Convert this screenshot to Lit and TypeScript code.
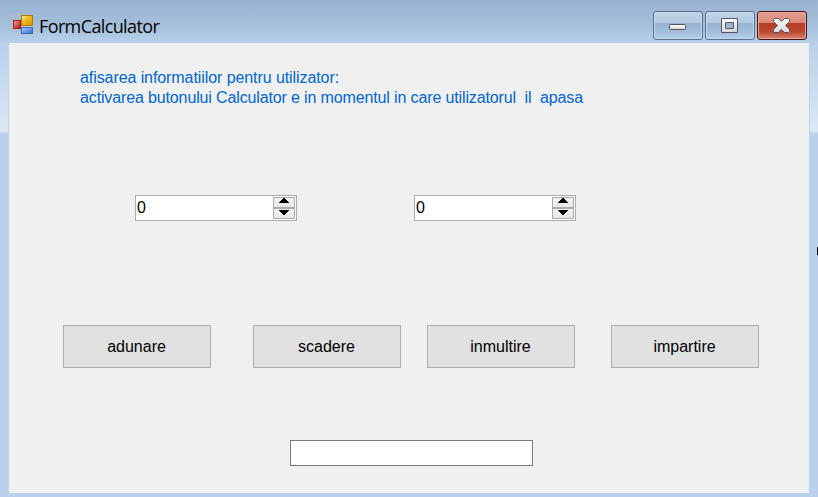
import { LitElement, html, css, svg } from "lit";
import { customElement, property } from "lit/decorators.js";

@customElement("num-box")
class NumBox extends LitElement {
  @property({ type: Number }) value = 0;
  static styles = css`
    :host { display: flex; box-sizing: border-box; width: 162px; height: 26px; border: 1px solid #ababab; background: #fff; padding: 1px; }
    .value { flex: 1; font: 16px/22px "Liberation Sans", Arial, sans-serif; color: #000; }
    .spin { display: flex; flex-direction: column; width: 22px; }
    .step { flex: 1; box-sizing: border-box; border: 1px solid #ababab; background: linear-gradient(#f2f2f2, #e8e8e8); display: flex; justify-content: center; }
    .step svg { display: block; width: 10px; height: 5px; margin-right: 1px; }
    .up svg { margin-top: 0; }
    .down svg { margin-top: 1px; }
  `;
  render() {
    return html`<div class="value">${this.value}</div>
      <div class="spin">
        <div class="step up"><svg viewBox="0 0 10 5" shape-rendering="crispEdges"><path d="M4 0h2v1h1v1h1v1h1v1h1v1H0V4h1V3h1V2h1V1h1z" /></svg></div>
        <div class="step down"><svg viewBox="0 0 10 5" shape-rendering="crispEdges"><path d="M0 0h10v1H9v1H8v1H7v1H6v1H4V4H3V3H2V2H1V1H0z" /></svg></div>
      </div>`;
  }
}

const glyphFill = svg`<defs><linearGradient id="g" x1="0" y1="0" x2="0" y2="1"><stop offset="0" stop-color="#fff" /><stop offset="1" stop-color="#d6d6d6" /></linearGradient></defs>`;

const glyphs = {
  min: svg`${glyphFill}<rect x="15.5" y="12.5" width="16" height="5" rx=".8" fill="url(#g)" stroke="#535666"/>`,
  max: svg`${glyphFill}<path d="M15.5 6.500h16v14h-16zM19.500 10.500v6h8v-6z" fill="url(#g)" stroke="#535666" fill-rule="evenodd"/>`,
  close: svg`${glyphFill}<path d="M16.500 6.500h4l3 3 3-3h4l1 1v2l-4 4 4 4v2l-1 1h-4l-3-3-3 3h-4l-1-1v-2l4-4-4-4v-2z" fill="url(#g)" stroke="#535666" stroke-linejoin="round"/>`,
};

@customElement("app-root")
class AppRoot extends LitElement {
  static styles = css`
    :host { display: flex; flex-direction: column; box-sizing: border-box; width: 818px; height: 497px; overflow: hidden; position: relative;
      background: linear-gradient(#98b4d2 0, #9fb9d6 14px, #a7c1dc 28px, #b9d1ea 43px, #dce8f5 131px, #c5d8ec 133px, #b9d1ea 134px); }
    .bar { display: flex; height: 43px; box-sizing: border-box; padding: 0 11px 0 12px; }
    .logo { width: 22px; height: 22px; margin-top: 14px; }
    .title { margin: 13px 0 0 5px; flex: 1; font: 18px/26px "Open Sans", "Noto Sans", sans-serif; letter-spacing: -0.62px; color: #000; }
    .controls { display: flex; gap: 2px; padding-top: 11px; }
    .ctl { width: 50px; height: 29px; box-sizing: border-box; border: 1px solid #596f89; border-radius: 3px; box-shadow: inset 0 0 0 1px #c5d8eb;
      background: linear-gradient(#bfd3e8 0, #b3cbe2 11px, #98b2cf 11px, #a4bfdb 20px, #b5d0ea 100%); }
    .ctl svg { display: block; width: 48px; height: 27px; }
    .close { border-color: #43141a; box-shadow: inset 0 0 0 1px #e9a798;
      background: linear-gradient(#e4a193 0, #da8878 11px, #b83c26 11px, #bb4932 20px, #d78876 100%); }
    .form { box-sizing: border-box; margin: 0 8px 0 8px; width: 802px; height: 450px; background: #f0f0f0; border: solid #b9d1ea; border-width: 0 1px;
      display: flex; flex-direction: column; font: 16px/20px "Liberation Sans", Arial, sans-serif; }
    .info { margin: 25px 0 0 71px; color: #0066cc; white-space: pre; height: 40px; }
    .l1 { letter-spacing: -0.08px; }
    .l2 { letter-spacing: -0.135px; }
    .numbers { display: flex; gap: 117px; margin: 87px 0 0 126px; }
    .ops { display: flex; margin: 104px 0 0 54px; }
    .op { width: 148px; height: 43px; box-sizing: border-box; padding: 0 1px 0 0; border: 1px solid #adadad; border-radius: 0; background: #e1e1e1; color: #000;
      font: 16px/20px "Liberation Sans", Arial, sans-serif; }
    .op + .op { margin-left: 42px; }
    .op.third { margin-left: 26px; }
    .op.fourth { margin-left: 36px; }
    .result { margin: 72px 0 0 281px; width: 243px; height: 26px; box-sizing: border-box; border: 1px solid #7a7a7a; background: #fff; }
    .mark { position: absolute; right: 0; top: 247px; width: 1px; height: 8px; background: #000; }
  `;
  render() {
    return html`<div class="bar">
        <svg class="logo" viewBox="0 0 22 22">
          <defs>
            <linearGradient id="y" x1="0" y1="0" x2="1" y2="1"><stop offset="0" stop-color="#fff0a0" /><stop offset=".45" stop-color="#edb51a" /><stop offset="1" stop-color="#d99500" /></linearGradient>
            <linearGradient id="r" x1="0" y1="0" x2="1" y2="1"><stop offset="0" stop-color="#f5a69a" /><stop offset="1" stop-color="#b80d0d" /></linearGradient>
            <linearGradient id="b" x1="0" y1="0" x2="1" y2="1"><stop offset="0" stop-color="#a8d0ff" /><stop offset="1" stop-color="#3467d4" /></linearGradient>
          </defs>
          <path d="M.5 20.500V.5H9M.5 20.500H9M9.500 14v6" fill="none" stroke="#c3bfc3" />
          <rect x="9.500" y="1.500" width="11" height="10" fill="url(#y)" stroke="#ab7c08" />
          <rect x="1.500" y="6.500" width="7" height="8" fill="url(#r)" stroke="#a61b1b" />
          <rect x="9.500" y="13.500" width="11" height="6" fill="url(#b)" stroke="#3e66b5" />
          <path d="M9 12.500h12" stroke="#c4d0dd" />
        </svg>
        <div class="title">FormCalculator</div>
        <div class="controls">
          <div class="ctl"><svg viewBox="0 0 48 27">${glyphs.min}</svg></div>
          <div class="ctl"><svg viewBox="0 0 48 27">${glyphs.max}</svg></div>
          <div class="ctl close"><svg viewBox="0 0 48 27">${glyphs.close}</svg></div>
        </div>
      </div>
      <div class="form">
        <div class="info"><div class="l1">afisarea informatiilor pentru utilizator:</div><div class="l2">activarea butonului Calculator e in momentul in care utilizatorul  il  apasa</div></div>
        <div class="numbers"><num-box></num-box><num-box></num-box></div>
        <div class="ops">
          <button class="op">adunare</button>
          <button class="op">scadere</button>
          <button class="op third">inmultire</button>
          <button class="op fourth">impartire</button>
        </div>
        <div class="result"></div>
      </div>
      <div class="mark"></div>`;
  }
}
